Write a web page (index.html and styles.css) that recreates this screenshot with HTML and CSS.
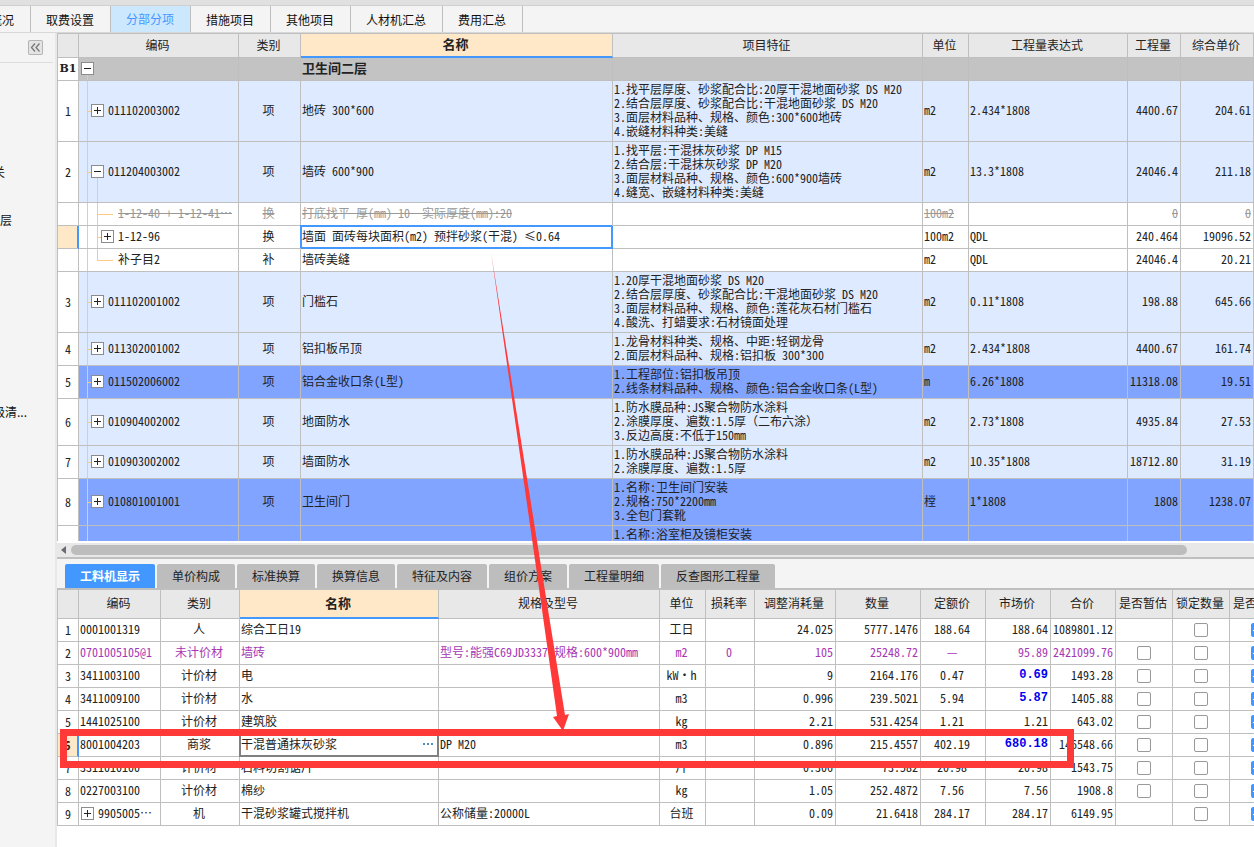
FILE: index.html
```html
<!DOCTYPE html>
<html lang="zh-CN">
<head>
<meta charset="utf-8">
<title>分部分项</title>
<link rel="stylesheet" href="styles.css">
</head>
<body>
<nav class="top-tabs">
  <button class="first"><span>概况</span></button>
  <button>取费设置</button>
  <button class="active">分部分项</button>
  <button>措施项目</button>
  <button>其他项目</button>
  <button>人材机汇总</button>
  <button>费用汇总</button>
</nav>
<div class="workspace">
  <aside class="side">
    <div class="side-head">
      <button class="collapse" aria-label="收起">
        <svg viewBox="0 0 15 15" width="15" height="15"><path d="M7 3.5 3.5 7.500 7 11.500M11.500 3.500 8 7.500 11.500 11.500" fill="none" stroke="#777" stroke-width="1.300"/></svg>
      </button>
    </div>
    <ul class="side-list">
      <li class="cut-s"><span>关</span></li>
      <li class="cut-m"><span>层</span></li>
      <li class="cut-l"><span>级清...</span></li>
    </ul>
  </aside>
  <main class="main">
    <div class="grid-pane">
      <table class="grid items">
        <colgroup><col class="w-no"><col class="w-code"><col class="w-kind"><col class="w-name"><col><col class="w-unit"><col class="w-expr"><col class="w-qty"><col class="w-price"></colgroup>
        <thead>
          <tr><th></th><th>编码</th><th>类别</th><th class="current">名称</th><th>项目特征</th><th>单位</th><th>工程量表达式</th><th>工程量</th><th>综合单价</th></tr>
        </thead>
        <tbody>
          <tr class="group"><td class="no">B1</td><td class="tree root"><div><button class="toggle minus" aria-label="折叠"></button></div></td><td></td><td>卫生间二层</td><td></td><td></td><td></td><td></td><td></td></tr>
          <tr class="item"><td class="no">1</td><td class="tree l1"><div><button class="toggle" aria-label="展开"></button>011102003002</div></td><td class="c">项</td><td>地砖 300*600</td><td>1.找平层厚度、砂浆配合比:20厚干混地面砂浆 DS M20<br>2.结合层厚度、砂浆配合比:干混地面砂浆 DS M20<br>3.面层材料品种、规格、颜色:300*600地砖<br>4.嵌缝材料种类:美缝</td><td>m2</td><td>2.434*1808</td><td class="r">4400.67</td><td class="r">204.61</td></tr>
          <tr class="item"><td class="no">2</td><td class="tree l1 open"><div><button class="toggle minus" aria-label="折叠"></button>011204003002</div></td><td class="c">项</td><td>墙砖 600*900</td><td>1.找平层:干混抹灰砂浆 DP M15<br>2.结合层:干混抹灰砂浆 DP M20<br>3.面层材料品种、规格、颜色:600*900墙砖<br>4.缝宽、嵌缝材料种类:美缝</td><td>m2</td><td>13.3*1808</td><td class="r">24046.4</td><td class="r">211.18</td></tr>
          <tr class="void"><td class="no"></td><td class="tree l2 leaf"><div>1-12-40 + 1-12-41⋯</div></td><td class="c">换</td><td>打底找平 厚(mm) 10&nbsp; 实际厚度(mm):20</td><td></td><td>100m2</td><td></td><td class="r">0</td><td class="r">0</td></tr>
          <tr><td class="no picked"></td><td class="tree l2"><div><button class="toggle" aria-label="展开"></button>1-12-96</div></td><td class="c">换</td><td class="selected">墙面 面砖每块面积(m2) 预拌砂浆(干混) ≤0.64</td><td></td><td>100m2</td><td>QDL</td><td class="r">240.464</td><td class="r">19096.52</td></tr>
          <tr><td class="no"></td><td class="tree l2 leaf last"><div>补子目2</div></td><td class="c">补</td><td>墙砖美缝</td><td></td><td>m2</td><td>QDL</td><td class="r">24046.4</td><td class="r">20.21</td></tr>
          <tr class="item"><td class="no">3</td><td class="tree l1"><div><button class="toggle" aria-label="展开"></button>011102001002</div></td><td class="c">项</td><td>门槛石</td><td>1.20厚干混地面砂浆 DS M20<br>2.结合层厚度、砂浆配合比:干混地面砂浆 DS M20<br>3.面层材料品种、规格、颜色:莲花灰石材门槛石<br>4.酸洗、打蜡要求:石材镜面处理</td><td>m2</td><td>0.11*1808</td><td class="r">198.88</td><td class="r">645.66</td></tr>
          <tr class="item"><td class="no">4</td><td class="tree l1"><div><button class="toggle" aria-label="展开"></button>011302001002</div></td><td class="c">项</td><td>铝扣板吊顶</td><td>1.龙骨材料种类、规格、中距:轻钢龙骨<br>2.面层材料品种、规格:铝扣板 300*300</td><td>m2</td><td>2.434*1808</td><td class="r">4400.67</td><td class="r">161.74</td></tr>
          <tr class="marked"><td class="no">5</td><td class="tree l1"><div><button class="toggle" aria-label="展开"></button>011502006002</div></td><td class="c">项</td><td>铝合金收口条(L型)</td><td>1.工程部位:铝扣板吊顶<br>2.线条材料品种、规格、颜色:铝合金收口条(L型)</td><td>m</td><td>6.26*1808</td><td class="r">11318.08</td><td class="r">19.51</td></tr>
          <tr class="item"><td class="no">6</td><td class="tree l1"><div><button class="toggle" aria-label="展开"></button>010904002002</div></td><td class="c">项</td><td>地面防水</td><td>1.防水膜品种:JS聚合物防水涂料<br>2.涂膜厚度、遍数:1.5厚（二布六涂）<br>3.反边高度:不低于150mm</td><td>m2</td><td>2.73*1808</td><td class="r">4935.84</td><td class="r">27.53</td></tr>
          <tr class="item"><td class="no">7</td><td class="tree l1"><div><button class="toggle" aria-label="展开"></button>010903002002</div></td><td class="c">项</td><td>墙面防水</td><td>1.防水膜品种:JS聚合物防水涂料<br>2.涂膜厚度、遍数:1.5厚</td><td>m2</td><td>10.35*1808</td><td class="r">18712.80</td><td class="r">31.19</td></tr>
          <tr class="marked"><td class="no">8</td><td class="tree l1"><div><button class="toggle" aria-label="展开"></button>010801001001</div></td><td class="c">项</td><td>卫生间门</td><td>1.名称:卫生间门安装<br>2.规格:750*2200mm<br>3.全包门套靴</td><td>樘</td><td>1*1808</td><td class="r">1808</td><td class="r">1238.07</td></tr>
          <tr class="marked tail"><td class="no"></td><td class="tree l0"></td><td></td><td></td><td>1.名称:浴室柜及镜柜安装</td><td></td><td></td><td></td><td></td></tr>
        </tbody>
      </table>
    </div>
    <div class="scrollbar"><span class="arrow-left"></span><span class="thumb"></span></div>
    <section class="detail">
      <div class="detail-tabs">
        <button class="active">工料机显示</button>
        <button>单价构成</button>
        <button>标准换算</button>
        <button>换算信息</button>
        <button>特征及内容</button>
        <button>组价方案</button>
        <button>工程量明细</button>
        <button>反查图形工程量</button>
      </div>
      <div class="detail-pane">
        <table class="grid parts">
          <colgroup><col class="w-no"><col class="p-code"><col class="p-kind"><col class="p-name"><col><col class="p-unit"><col class="p-loss"><col class="p-use"><col class="p-qty"><col class="p-price"><col class="p-price"><col class="p-price"><col class="p-check"><col class="p-check"><col class="p-check"></colgroup>
          <thead>
            <tr><th></th><th>编码</th><th>类别</th><th class="current">名称</th><th>规格及型号</th><th>单位</th><th>损耗率</th><th>调整消耗量</th><th>数量</th><th>定额价</th><th>市场价</th><th>合价</th><th>是否暂估</th><th>锁定数量</th><th class="edge">是否</th></tr>
          </thead>
          <tbody>
            <tr><td class="no">1</td><td>0001001319</td><td class="c">人</td><td>综合工日19</td><td></td><td class="c">工日</td><td></td><td class="r">24.025</td><td class="r">5777.1476</td><td class="c">188.64</td><td class="r">188.64</td><td class="r">1089801.12</td><td></td><td class="c check"><input type="checkbox" aria-label="锁定数量 1"></td><td class="c check"><input type="checkbox" checked aria-label="是否 1"></td></tr>
            <tr class="unpriced"><td class="no">2</td><td>0701005105@1</td><td class="c">未计价材</td><td>墙砖</td><td>型号:能强C69JD3337 规格:600*900mm</td><td class="c">m2</td><td class="c">0</td><td class="r">105</td><td class="r">25248.72</td><td class="c">—</td><td class="r">95.89</td><td class="r">2421099.76</td><td class="c check"><input type="checkbox" aria-label="是否暂估 2"></td><td class="c check"><input type="checkbox" aria-label="锁定数量 2"></td><td class="c check"><input type="checkbox" checked aria-label="是否 2"></td></tr>
            <tr><td class="no">3</td><td>3411003100</td><td class="c">计价材</td><td>电</td><td></td><td class="c">kW·h</td><td></td><td class="r">9</td><td class="r">2164.176</td><td class="c">0.47</td><td class="r changed">0.69</td><td class="r">1493.28</td><td class="c check"><input type="checkbox" aria-label="是否暂估 3"></td><td class="c check"><input type="checkbox" aria-label="锁定数量 3"></td><td class="c check"><input type="checkbox" checked aria-label="是否 3"></td></tr>
            <tr><td class="no">4</td><td>3411009100</td><td class="c">计价材</td><td>水</td><td></td><td class="c">m3</td><td></td><td class="r">0.996</td><td class="r">239.5021</td><td class="c">5.94</td><td class="r changed">5.87</td><td class="r">1405.88</td><td class="c check"><input type="checkbox" aria-label="是否暂估 4"></td><td class="c check"><input type="checkbox" aria-label="锁定数量 4"></td><td class="c check"><input type="checkbox" checked aria-label="是否 4"></td></tr>
            <tr><td class="no">5</td><td>1441025100</td><td class="c">计价材</td><td>建筑胶</td><td></td><td class="c">kg</td><td></td><td class="r">2.21</td><td class="r">531.4254</td><td class="c">1.21</td><td class="r">1.21</td><td class="r">643.02</td><td class="c check"><input type="checkbox" aria-label="是否暂估 5"></td><td class="c check"><input type="checkbox" aria-label="锁定数量 5"></td><td class="c check"><input type="checkbox" checked aria-label="是否 5"></td></tr>
            <tr><td class="no picked bold">6</td><td>8001004203</td><td class="c">商浆</td><td class="editing"><div class="edit">干混普通抹灰砂浆<button class="more" aria-label="更多"></button></div></td><td>DP M20</td><td class="c">m3</td><td></td><td class="r">0.896</td><td class="r">215.4557</td><td class="c">402.19</td><td class="r changed">680.18</td><td class="r">146548.66</td><td class="c check"><input type="checkbox" aria-label="是否暂估 6"></td><td class="c check"><input type="checkbox" aria-label="锁定数量 6"></td><td class="c check"><input type="checkbox" checked aria-label="是否 6"></td></tr>
            <tr><td class="no">7</td><td>3311010100</td><td class="c">计价材</td><td>石料切割锯片</td><td></td><td class="c">片</td><td></td><td class="r">0.306</td><td class="r">73.582</td><td class="c">20.98</td><td class="r">20.98</td><td class="r">1543.75</td><td class="c check"><input type="checkbox" aria-label="是否暂估 7"></td><td class="c check"><input type="checkbox" aria-label="锁定数量 7"></td><td class="c check"><input type="checkbox" checked aria-label="是否 7"></td></tr>
            <tr><td class="no">8</td><td>0227003100</td><td class="c">计价材</td><td>棉纱</td><td></td><td class="c">kg</td><td></td><td class="r">1.05</td><td class="r">252.4872</td><td class="c">7.56</td><td class="r">7.56</td><td class="r">1908.8</td><td class="c check"><input type="checkbox" aria-label="是否暂估 8"></td><td class="c check"><input type="checkbox" aria-label="锁定数量 8"></td><td class="c check"><input type="checkbox" checked aria-label="是否 8"></td></tr>
            <tr><td class="no">9</td><td class="tree flat"><div><button class="toggle" aria-label="展开"></button>9905005⋯</div></td><td class="c">机</td><td>干混砂浆罐式搅拌机</td><td>公称储量:20000L</td><td class="c">台班</td><td></td><td class="r">0.09</td><td class="r">21.6418</td><td class="c">284.17</td><td class="r">284.17</td><td class="r">6149.95</td><td></td><td class="c check"><input type="checkbox" aria-label="锁定数量 9"></td><td class="c check"><input type="checkbox" checked aria-label="是否 9"></td></tr>
          </tbody>
        </table>
      </div>
    </section>
  </main>
</div>
<svg class="callout" viewBox="0 0 1254 847" width="1254" height="847" aria-hidden="true">
  <rect x="63.500" y="732.500" width="1007" height="32" fill="none" stroke="#ff3838" stroke-width="7"/>
  <path d="M491 252 540 560 565 715 569 714 563 731 553 717 557 716 535 560Z" fill="#ff3838"/>
</svg>
</body>
</html>
```
FILE: styles.css
```css
* { box-sizing: border-box; }

body {
  margin: 0;
  height: 100vh;
  display: flex;
  flex-direction: column;
  overflow: hidden;
  background: #f4f4f4;
  color: #222;
  font: 12px/14px "Noto Sans Mono CJK SC", "Noto Sans CJK SC", sans-serif;
}

button {
  margin: 0;
  padding: 0;
  border: 0;
  background: none;
  color: inherit;
  font: inherit;
}

/* top tabs */
.top-tabs {
  display: flex;
  flex: none;
  height: 33px;
  border-top: 5px solid #e0e0e0;
  border-bottom: 1px solid #d8d8d8;
  box-shadow: inset 0 1px #cfcfcf;
  font-family: "Noto Sans CJK SC", sans-serif;
  color: #111;
}
.top-tabs button {
  margin-top: 1px;
  padding: 2px 16px 0 15px;
  border-right: 1px solid #bfbfbf;
  white-space: nowrap;
}
.top-tabs .first {
  display: flex;
  align-items: center;
  justify-content: flex-end;
  width: 31px;
  padding-left: 0;
  overflow: hidden;
}
.top-tabs .active { background: #cce8ff; color: #4398ff; padding-top: 0; }

.workspace { display: flex; flex: 1; min-height: 0; }

/* side panel */
.side {
  flex: 0 0 57px;
  border-right: 2px solid #e8e8e8;
  font-family: "Noto Sans CJK SC", sans-serif;
  color: #111;
}
.side-head {
  display: flex;
  justify-content: flex-end;
  height: 30px;
  margin-right: 2px;
  padding: 7px 10px 0 0;
  border-bottom: 1px solid #dcdcdc;
}
.collapse {
  width: 15px;
  height: 15px;
  border-radius: 2px;
  background: #e4e4e4;
  box-shadow: inset 0 0 0 1px #b4b4b4;
}
.collapse svg { display: block; }
.side-list { margin: 0; padding: 102px 0 0; list-style: none; }
.side-list li {
  display: flex;
  justify-content: flex-end;
  overflow: hidden;
  white-space: nowrap;
}
.cut-s { width: 5px; margin-bottom: 34px; }
.cut-m { width: 12px; margin-bottom: 178px; }
.cut-l { width: 27px; }

.main {
  display: flex;
  flex: 1;
  flex-direction: column;
  min-width: 0;
  background: #fff;
}

/* grids */
.grid {
  width: 100%;
  table-layout: fixed;
  border-collapse: separate;
  border-spacing: 0;
  border-left: 1px solid #bfbfbf;
}
.grid th {
  height: 24px;
  padding: 0 2px 2px 0;
  border: solid #bfbfbf;
  border-width: 0 1px 1px 0;
  background: #e8e8e8;
  font-weight: 400;
  white-space: nowrap;
  overflow: hidden;
}
.grid td {
  height: 23px;
  padding: 1px 2px 3px 1px;
  border: solid #bfbfbf;
  border-width: 0 1px 1px 0;
  white-space: nowrap;
  overflow: hidden;
}
.grid .current {
  border-bottom: 2px solid #4398ff;
  background: #ffe8c8;
  font-size: 13px;
  font-weight: 700;
}
.grid .c { padding-right: 3px; text-align: center; }
.grid .check { padding: 2px; }
.grid .r { text-align: right; }
.grid .no { padding: 2px 0; background: #fff; text-align: center; }
.grid .picked { background: #ffe8c8; border-right: 2px solid #4398ff; }
.grid .bold { font-weight: 700; }

.grid-pane {
  flex: 1;
  min-height: 0;
  overflow: hidden;
  border-bottom: 2px solid #fff;
}
.items { border-top: 1px solid #bfbfbf; }
.w-no { width: 21px; }
.w-code { width: 160px; }
.w-kind { width: 62px; }
.w-name { width: 312px; }
.w-unit { width: 46px; }
.w-expr { width: 159px; }
.w-qty { width: 53px; }
.w-price { width: 73px; }

.group td { background-color: #c3c3c3; font-size: 13px; font-weight: 700; }
.grid .group .no { font-family: "DejaVu Serif", serif; font-size: 11px; }
.item td { background-color: #deeaff; }
.marked td { background-color: #80a4ff; }
.void td { color: #999; text-decoration: line-through; }
.grid .selected {
  border-color: #4398ff;
  box-shadow: inset 0 0 0 1px #4398ff, -1px -1px 0 #4398ff;
}
.tail td { height: 47px; vertical-align: top; }

/* tree column: guide lines are background strips */
.tree { --guide: linear-gradient(#ffc880, #ffc880); background-repeat: no-repeat; }
.grid .tree { padding-left: 2px; }
.tree div { display: flex; align-items: center; gap: 4px; }
.tree.root {
  background-image: var(--guide);
  background-position: 8px 100%;
  background-size: 1px 50%;
}
.tree.l0 {
  background-image: var(--guide);
  background-position: 8px 0;
  background-size: 1px 100%;
}
.grid .l1 {
  padding-left: 12px;
  background-image: var(--guide), var(--guide);
  background-position: 8px 0, 8px 50%;
  background-size: 1px 100%, 5px 1px;
}
.grid .open {
  background-image: var(--guide), var(--guide), var(--guide);
  background-position: 8px 0, 8px 50%, 18px 100%;
  background-size: 1px 100%, 5px 1px, 1px 50%;
}
.grid .l2 {
  padding-left: 22px;
  background-image: var(--guide), var(--guide), var(--guide);
  background-position: 8px 0, 18px 0, 18px 50%;
  background-size: 1px 100%, 1px 100%, 5px 1px;
}
.grid .leaf { padding-left: 39px; background-size: 1px 100%, 1px 100%, 16px 1px; }
.grid .last { background-size: 1px 100%, 1px 50%, 16px 1px; }

.toggle {
  flex: none;
  width: 13px;
  height: 13px;
  border: 1px solid #8c8c8c;
  background: linear-gradient(#222, #222) center / 7px 1px no-repeat,
              linear-gradient(#222, #222) center / 1px 7px no-repeat, #fff;
}
.toggle.minus { background: linear-gradient(#222, #222) center / 7px 1px no-repeat, #fff; }

.scrollbar {
  display: flex;
  align-items: center;
  flex: none;
  height: 16px;
  padding: 0 67px 0 4px;
  border-bottom: 2px solid #bfbfbf;
  background: #e8e8e8;
}
.arrow-left {
  margin-right: 5px;
  border: solid transparent;
  border-width: 4px 5px 4px 0;
  border-right-color: #6a6a74;
}
.thumb { flex: 1; height: 10px; border-radius: 5px; background: #bdbdbd; }

/* detail section */
.detail { flex: none; padding-bottom: 21px; }
.detail-tabs {
  display: flex;
  gap: 2px;
  padding: 5px 0 0 8px;
  background: #f4f4f4;
  border-bottom: 2px solid #bfbfbf;
  font-family: "Noto Sans CJK SC", sans-serif;
}
.detail-tabs button {
  height: 24px;
  padding: 0 15px;
  border-radius: 2px 2px 0 0;
  background: #bdbdbd;
  white-space: nowrap;
}
.detail-tabs .active { background: #4398ff; color: #fff; font-weight: 700; }
.detail-pane { overflow: hidden; }
.parts { width: calc(100% + 33px); }
.parts th { height: 29px; }
.parts th.edge { padding-left: 3px; text-align: left; }
.p-code { width: 82px; }
.p-kind { width: 79px; }
.p-name { width: 199px; }
.p-unit { width: 46px; }
.p-loss { width: 49px; }
.p-use { width: 81px; }
.p-qty { width: 85px; }
.p-price { width: 65px; }
.p-check { width: 57px; }
.unpriced td { color: #a637b4; }
.grid .unpriced .no { color: #222; }
.grid .changed {
  color: #0000f0;
  font-family: "Liberation Mono", monospace;
  font-weight: 700;
}
.grid .editing {
  border-color: #808080;
  box-shadow: inset 0 0 0 1px #808080, -1px 0 0 #808080;
}
.edit { display: flex; align-items: center; justify-content: space-between; }
.more {
  width: 10px;
  height: 2px;
  margin-right: 3px;
  background: repeating-linear-gradient(90deg, #4a90c8 0 2px, transparent 2px 4px);
}

input[type="checkbox"] {
  display: block;
  width: 14px;
  height: 14px;
  margin: 0 auto;
  appearance: none;
  border: 1px solid #999;
  border-radius: 2px;
  background: #fff;
}
input[type="checkbox"]:checked {
  border-color: #4398ff;
  background: linear-gradient(#fff, #fff) center / 10px 1px no-repeat, #4398ff;
}

/* annotation laid over both grids */
.callout { position: absolute; top: 0; left: 0; pointer-events: none; }
```
